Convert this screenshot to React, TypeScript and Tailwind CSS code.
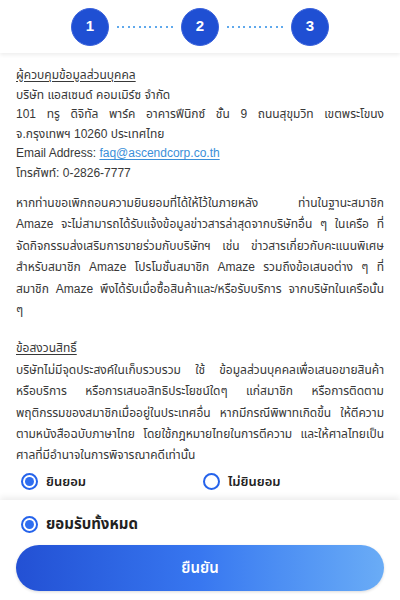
import React from 'react';

const thai = { fontFamily: '"Liberation Sans", "Noto Sans Thai", "Noto Sans", sans-serif' };

const Step = ({ n }: { n: number }) => (
   <div className="flex h-[38px] w-[38px] items-center justify-center rounded-full border border-[#3a62dc] bg-[#1f4fd3] text-[15px] font-bold text-white">
      {n}
   </div>
);

const Dots = () => (
   <div className="flex w-[56px] justify-between">
      {Array.from({ length: 11 }).map((_, i) => (
         <span key={i} className="h-[2px] w-[2px] rounded-full bg-[#2b8de6]" />
      ))}
   </div>
);

const Radio = ({ checked }: { checked: boolean }) => (
   <span className="flex h-[17px] w-[17px] shrink-0 items-center justify-center rounded-full border-2 border-[#2563eb] bg-white">
      {checked && <span className="h-[9px] w-[9px] rounded-full bg-[#2f6ef0]" />}
   </span>
);

const JLine = ({ children }: { children: React.ReactNode }) => (
   <div className="whitespace-nowrap text-justify [text-align-last:justify]">{children}</div>
);

const privacy = [
   'หากท่านขอเพิกถอนความยินยอมที่ได้ให้ไว้ในภายหลัง ท่านในฐานะสมาชิก',
   'Amaze จะไม่สามารถได้รับแจ้งข้อมูลข่าวสารล่าสุดจากบริษัทอื่น ๆ ในเครือ ที่',
   'จัดกิจกรรมส่งเสริมการขายร่วมกับบริษัทฯ เช่น ข่าวสารเกี่ยวกับคะแนนพิเศษ',
   'สำหรับสมาชิก Amaze โปรโมชั่นสมาชิก Amaze รวมถึงข้อเสนอต่าง ๆ ที่',
   'สมาชิก Amaze พึงได้รับเมื่อซื้อสินค้าและ/หรือรับบริการ จากบริษัทในเครือนั้น',
];

const rights = [
   'บริษัทไม่มีจุดประสงค์ในเก็บรวบรวม ใช้ ข้อมูลส่วนบุคคลเพื่อเสนอขายสินค้า',
   'หรือบริการ หรือการเสนอสิทธิประโยชน์ใดๆ แก่สมาชิก หรือการติดตาม',
   'พฤติกรรมของสมาชิกเมื่ออยู่ในประเทศอื่น หากมีกรณีพิพาทเกิดขึ้น ให้ตีความ',
   'ตามหนังสือฉบับภาษาไทย โดยใช้กฎหมายไทยในการตีความ และให้ศาลไทยเป็น',
];

const App = () => {
   return (
      <main className="flex h-[600px] w-full flex-col overflow-hidden bg-white text-[#383838]" style={thai}>
         <header className="z-10 flex h-[53px] shrink-0 items-center justify-center gap-2 bg-white shadow-[0_2px_4px_rgba(0,0,0,0.07)]">
            <Step n={1} />
            <Dots />
            <Step n={2} />
            <Dots />
            <Step n={3} />
         </header>

         <section className="flex-1 overflow-hidden px-4 pt-[13px] text-[12px]">
            <div className="leading-[19.5px]">
               <div className="inline-block underline underline-offset-2">ผู้ควบคุมข้อมูลส่วนบุคคล</div>
               <div>บริษัท แอสเซนด์ คอมเมิร์ซ จำกัด</div>
               <JLine>101 ทรู ดิจิทัล พาร์ค อาคารฟีนิกซ์ ชั้น 9 ถนนสุขุมวิท เขตพระโขนง</JLine>
               <div>จ.กรุงเทพฯ 10260 ประเทศไทย</div>
               <div>
                  Email Address:{' '}
                  <span className="text-[#3b8fd9] underline underline-offset-2">faq@ascendcorp.co.th</span>
               </div>
               <div>โทรศัพท์: 0-2826-7777</div>
            </div>

            <div className="mt-[10px] leading-[21.4px]">
               {privacy.map((l) => (
                  <JLine key={l}>{l}</JLine>
               ))}
               <div>ๆ</div>
            </div>

            <div className="mt-[17px] leading-[21.4px]">
               <div className="inline-block underline underline-offset-2">ข้อสงวนสิทธิ์</div>
               {rights.map((l) => (
                  <JLine key={l}>{l}</JLine>
               ))}
               <div>ศาลที่มีอำนาจในการพิจารณาคดีเท่านั้น</div>
            </div>

            <div className="mt-[5px] flex items-center text-[13px] font-semibold text-[#222]">
               <label className="flex w-[187px] items-center gap-2 pl-[5px]">
                  <Radio checked />
                  ยินยอม
               </label>
               <label className="flex items-center gap-2">
                  <Radio checked={false} />
                  ไม่ยินยอม
               </label>
            </div>
         </section>

         <footer className="z-10 flex h-[100px] shrink-0 flex-col gap-[11px] bg-white px-4 pt-[14px] shadow-[0_-3px_6px_rgba(0,0,0,0.07)]">
            <label className="flex h-[20px] items-center gap-2 pl-[5px] text-[15px] font-bold text-[#222]">
               <Radio checked />
               ยอมรับทั้งหมด
            </label>
            <button className="h-[46px] w-full rounded-full bg-gradient-to-r from-[#2350d4] via-[#3877f0] to-[#6aacf6] text-[15px] font-semibold text-white shadow-[0_1px_3px_rgba(0,0,0,0.15)]">
               ยืนยัน
            </button>
         </footer>
      </main>
   );
};

export default App;
